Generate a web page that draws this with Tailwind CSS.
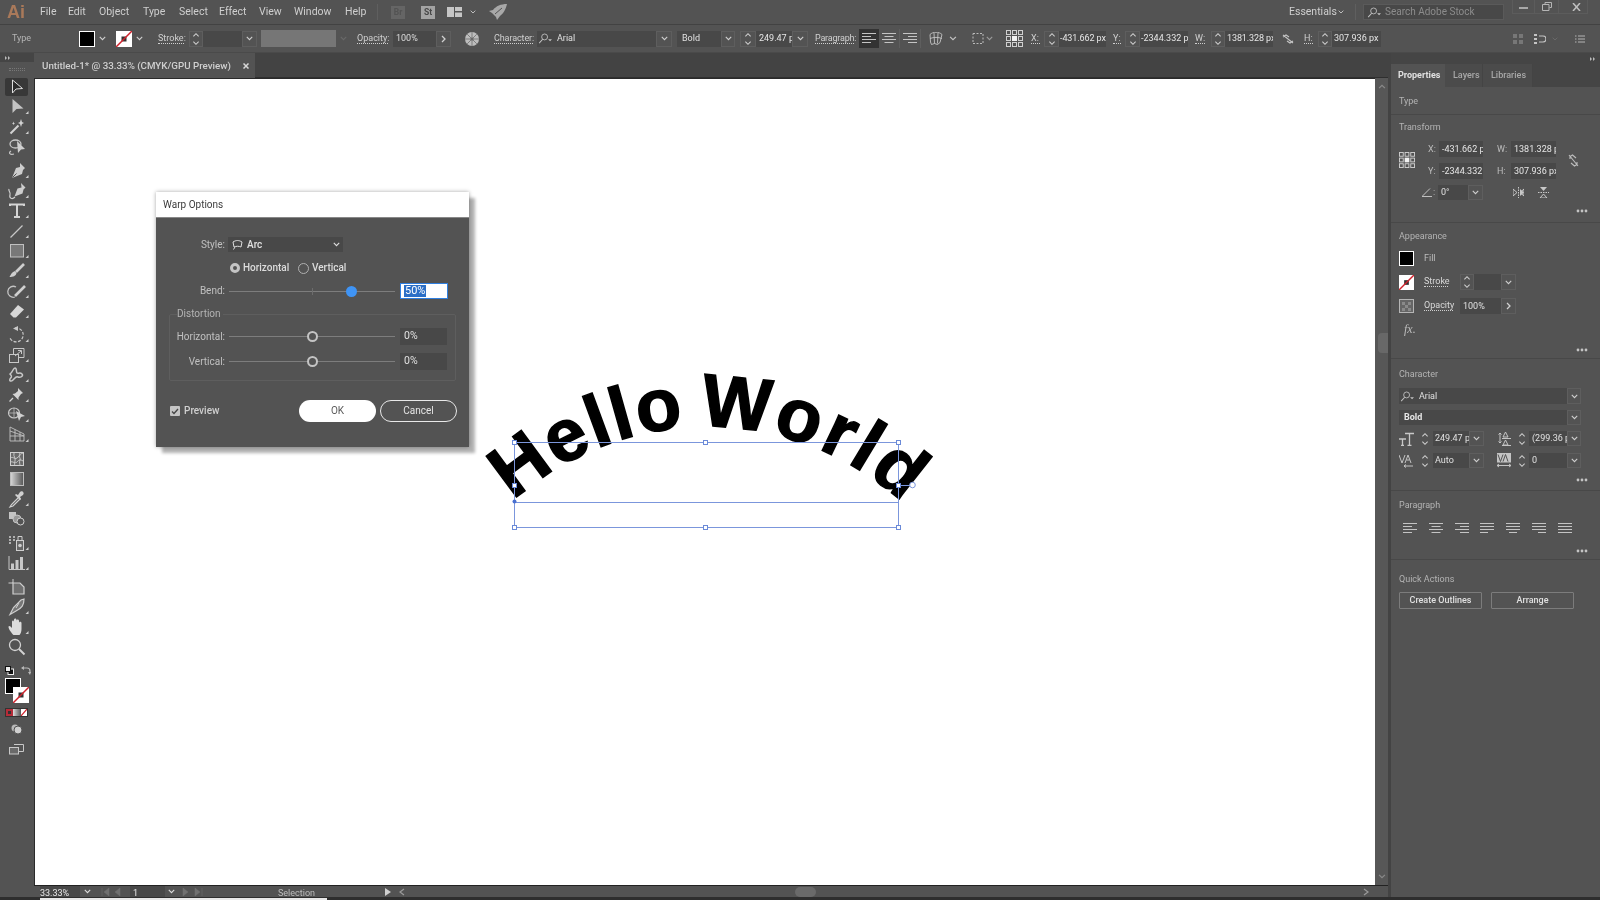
<!DOCTYPE html>
<html>
<head>
<meta charset="utf-8">
<script src="https://cdn.jsdelivr.net/npm/@tailwindcss/browser@4"></script>
</head>
<body class="m-0 bg-[#535353]">
<svg class="absolute w-0 h-0">
  <defs>
    <symbol id="chev" viewBox="0 0 9 6"><path d="M1 1l3.500 3.500L8 1" fill="none" stroke="currentColor" stroke-width="1.400"/></symbol>
    <symbol id="spin" viewBox="0 0 9 16"><path d="M1.500 5L4.500 2l3 3M1.500 11l3 3 3-3" fill="none" stroke="currentColor" stroke-width="1.200"/></symbol>
    <symbol id="dots" viewBox="0 0 12 4"><circle cx="2" cy="2" r="1.400" fill="#c4c4c4"/><circle cx="6" cy="2" r="1.400" fill="#c4c4c4"/><circle cx="10" cy="2" r="1.400" fill="#c4c4c4"/></symbol>
    <symbol id="grid9" viewBox="0 0 17 17"><g fill="none" stroke="#cfcfcf" stroke-width="1"><rect x=".5" y=".5" width="4" height="4"/><rect x="6.500" y=".5" width="4" height="4"/><rect x="12.500" y=".5" width="4" height="4"/><rect x=".5" y="6.500" width="4" height="4"/><rect x="12.500" y="6.500" width="4" height="4"/><rect x=".5" y="12.500" width="4" height="4"/><rect x="6.500" y="12.500" width="4" height="4"/><rect x="12.500" y="12.500" width="4" height="4"/></g><rect x="6" y="6" width="5" height="5" fill="#f0f0f0"/></symbol>
    <symbol id="al" viewBox="0 0 14 13"><path d="M0 1.500h14M0 4.500h9M0 7.500h14M0 10.500h9" stroke="#c4c4c4" stroke-width="1.100"/></symbol>
    <symbol id="ac" viewBox="0 0 14 13"><path d="M0 1.500h14M2.500 4.500h9M0 7.500h14M2.500 10.500h9" stroke="#c4c4c4" stroke-width="1.100"/></symbol>
    <symbol id="ar" viewBox="0 0 14 13"><path d="M0 1.500h14M5 4.500h9M0 7.500h14M5 10.500h9" stroke="#c4c4c4" stroke-width="1.100"/></symbol>
    <symbol id="jl" viewBox="0 0 14 13"><path d="M0 1.500h14M0 4.500h14M0 7.500h14M0 10.500h8" stroke="#c4c4c4" stroke-width="1.100"/></symbol>
    <symbol id="jc" viewBox="0 0 14 13"><path d="M0 1.500h14M0 4.500h14M0 7.500h14M3 10.500h8" stroke="#c4c4c4" stroke-width="1.100"/></symbol>
    <symbol id="jr" viewBox="0 0 14 13"><path d="M0 1.500h14M0 4.500h14M0 7.500h14M6 10.500h8" stroke="#c4c4c4" stroke-width="1.100"/></symbol>
    <symbol id="ja" viewBox="0 0 14 13"><path d="M0 1.500h14M0 4.500h14M0 7.500h14M0 10.500h14" stroke="#c4c4c4" stroke-width="1.100"/></symbol>
    <symbol id="find" viewBox="0 0 18 14"><circle cx="8.500" cy="5" r="3.800" fill="none" stroke="#c4c4c4" stroke-width="1.100"/><path d="M6 8l-4.500 5" stroke="#c4c4c4" stroke-width="1.300"/><path d="M13 8h5l-2.500 2.500z" fill="#c4c4c4"/></symbol>
    <symbol id="nofill" viewBox="0 0 16 16"><rect width="16" height="16" fill="#fff"/><rect x="5.500" y="5.500" width="5" height="5" fill="#333"/><path d="M0 16L16 0" stroke="#d0222c" stroke-width="1.500"/></symbol>
    <symbol id="tri" viewBox="0 0 34 20"><path d="M28.500 14v3h-3z" fill="#cfcfcf"/></symbol>
  </defs>
</svg>

<div class="relative w-[1600px] h-[900px] overflow-hidden flex flex-col bg-[#535353] text-[#d0d0d0] text-[10px] leading-none font-['Roboto',sans-serif] blur-[0.3px]">

  <!-- menu bar -->
  <div class="h-[25px] shrink-0 flex items-center border-b border-[#424242] text-[10.5px] text-[#cfcfcf]">
    <div class="ml-[7px] w-[16px] text-[18px] font-bold text-[#a9795a] font-['Liberation_Sans',sans-serif]">Ai</div>
    <div class="ml-[17px] w-[28px]">File</div>
    <div class="w-[31px]">Edit</div>
    <div class="w-[44px]">Object</div>
    <div class="w-[36px]">Type</div>
    <div class="w-[40px]">Select</div>
    <div class="w-[40px]">Effect</div>
    <div class="w-[35px]">View</div>
    <div class="w-[51px]">Window</div>
    <div class="w-[32px]">Help</div>
    <div class="w-px h-[16px] bg-[#5f5f5f]"></div>
    <div class="ml-[13px] w-[14px] h-[13px] bg-[#656565] text-[#535353] text-[8.5px] font-bold flex items-center justify-center">Br</div>
    <div class="ml-[16px] w-[14px] h-[13px] bg-[#a3a3a3] text-[#474747] text-[8.5px] font-bold flex items-center justify-center">St</div>
    <svg class="ml-[12px] w-[15px] h-[10px]" viewBox="0 0 15 10"><path d="M0 0h7v10H0zM8 0h7v4H8zM8 5.500h7V10H8z" fill="#c6c6c6"/></svg>
    <svg class="ml-[8px] w-[6px] h-[4px] text-[#c6c6c6]"><use href="#chev"/></svg>
    <svg class="ml-[13px] w-[18px] h-[16px]" viewBox="0 0 18 16"><path d="M18 0C12 0 7 2 4 6L0 7l3 2 4 4 1 3 3-4c3-2 6-7 7-12z" fill="#a8a8a8"/><path d="M13 4L6 10" stroke="#535353"/></svg>
    <div class="ml-auto w-[41px] text-[#cfcfcf]">Essentials</div>
    <svg class="ml-[8px] w-[6px] h-[4px] text-[#c6c6c6]"><use href="#chev"/></svg>
    <div class="ml-[11px] w-px h-[16px] bg-[#5f5f5f]"></div>
    <div class="ml-[7px] w-[141px] h-[16px] bg-[#484848] border border-[#5a5a5a] flex items-center text-[#8c8c8c] text-[10px]">
      <svg class="ml-[3px] w-[14px] h-[11px]"><use href="#find"/></svg>
      <span class="ml-[4px]">Search Adobe Stock</span>
    </div>
    <div class="ml-[8px] mr-[12px] w-[76px] h-[14px] self-start flex border border-t-0 border-[#5c5c5c]">
      <div class="w-[22px] flex items-center justify-center border-r border-[#5c5c5c]"><div class="w-[9px] h-[2px] bg-[#a8a8a8] mt-[3px]"></div></div>
      <div class="w-[24px] flex items-center justify-center border-r border-[#5c5c5c]"><svg class="w-[10px] h-[9px]" viewBox="0 0 10 9"><path d="M3 2.500V.5h6.500v5H7.500M.5 2.500h6.500v6H.5z" fill="none" stroke="#b5b5b5"/></svg></div>
      <div class="flex-1 flex items-center justify-end pr-[6px]"><svg class="w-[9px] h-[8px]" viewBox="0 0 9 8"><path d="M1 0l7 8M8 0L1 8" stroke="#c0c0c0" stroke-width="1.500"/></svg></div>
    </div>
  </div>

  <!-- control bar -->
  <div class="h-[28px] shrink-0 flex items-center text-[9px] whitespace-nowrap border-b border-[#4a4a4a]">
    <div class="ml-[12px] w-[67px] text-[#b4b4b4]">Type</div>
    <div class="w-[16px] h-[16px] bg-black border border-white"></div>
    <div class="w-[15px] h-[16px] flex items-center justify-center text-[#d0d0d0]"><svg class="w-[7px] h-[5px]"><use href="#chev"/></svg></div>
    <svg class="ml-[6px] w-[16px] h-[16px]"><use href="#nofill"/></svg>
    <div class="w-[15px] h-[16px] flex items-center justify-center text-[#d0d0d0]"><svg class="w-[7px] h-[5px]"><use href="#chev"/></svg></div>
    <div class="ml-[11px] w-[26px] border-b border-dotted border-[#cfcfcf]">Stroke:</div>
    <div class="ml-[5px] w-[14px] h-[16px] border border-[#5e5e5e] flex items-center justify-center text-[#d0d0d0]"><svg class="w-[8px] h-[14px]"><use href="#spin"/></svg></div>
    <div class="w-[39px] h-[16px] bg-[#484848]"></div>
    <div class="w-[15px] h-[16px] border border-[#5e5e5e] flex items-center justify-center text-[#d0d0d0]"><svg class="w-[7px] h-[5px]"><use href="#chev"/></svg></div>
    <div class="ml-[4px] w-[75px] h-[17px] bg-[#767676]"></div>
    <div class="w-[14px] flex justify-center text-[#696969]"><svg class="w-[7px] h-[5px]"><use href="#chev"/></svg></div>
    <div class="ml-[7px] w-[31px] border-b border-dotted border-[#cfcfcf]">Opacity:</div>
    <div class="ml-[5px] w-[43px] h-[16px] bg-[#484848] pl-[3px] flex items-center text-[#dcdcdc]">100%</div>
    <div class="w-[15px] h-[16px] border border-[#5e5e5e] flex items-center justify-center text-[#d0d0d0]"><svg class="w-[5px] h-[8px]" viewBox="0 0 5 8"><path d="M1 1l3 3-3 3" fill="none" stroke="currentColor" stroke-width="1.300"/></svg></div>
    <svg class="ml-[14px] w-[14px] h-[14px]" viewBox="0 0 13 13"><circle cx="6.500" cy="6.500" r="6.500" fill="#bdbdbd"/><path d="M6.500 0v13M0 6.500h13M2 2l9 9M11 2l-9 9" stroke="#686868" stroke-width=".7"/><circle cx="6.500" cy="6.500" r="1.500" fill="#686868"/></svg>
    <div class="ml-[15px] w-[39px] border-b border-dotted border-[#cfcfcf] tracking-[-0.1px]">Character:</div>
    <div class="ml-[4px] w-[119px] h-[16px] bg-[#484848] flex items-center text-[#e0e0e0]"><svg class="ml-px w-[14px] h-[11px]"><use href="#find"/></svg><span class="ml-[5px]">Arial</span></div>
    <div class="w-[16px] h-[16px] border border-[#5e5e5e] flex items-center justify-center text-[#d0d0d0]"><svg class="w-[7px] h-[5px]"><use href="#chev"/></svg></div>
    <div class="ml-[5px] w-[44px] h-[16px] bg-[#484848] pl-[5px] flex items-center text-[#e0e0e0]">Bold</div>
    <div class="w-[14px] h-[16px] border border-[#5e5e5e] flex items-center justify-center text-[#d0d0d0]"><svg class="w-[7px] h-[5px]"><use href="#chev"/></svg></div>
    <div class="ml-[5px] w-[16px] h-[16px] border border-[#5e5e5e] flex items-center justify-center text-[#d0d0d0]"><svg class="w-[8px] h-[14px]"><use href="#spin"/></svg></div>
    <div class="w-[36px] h-[16px] bg-[#484848] pl-[3px] flex items-center overflow-hidden text-[#e6e6e6]">249.47 pt</div>
    <div class="w-[16px] h-[16px] border border-[#5e5e5e] flex items-center justify-center text-[#d0d0d0]"><svg class="w-[7px] h-[5px]"><use href="#chev"/></svg></div>
    <div class="ml-[7px] w-[39px] border-b border-dotted border-[#cfcfcf] tracking-[-0.2px]">Paragraph:</div>
    <div class="ml-[5px] w-[20px] h-[19px] bg-[#333] flex items-center justify-center"><svg class="w-[14px] h-[13px]"><use href="#al"/></svg></div>
    <div class="w-[21px] h-[19px] border-r border-[#5e5e5e] flex items-center justify-center"><svg class="w-[14px] h-[13px]"><use href="#ac"/></svg></div>
    <div class="w-[21px] h-[19px] border-r border-[#5e5e5e] flex items-center justify-center"><svg class="w-[14px] h-[13px]"><use href="#ar"/></svg></div>
    <svg class="ml-[8px] w-[14px] h-[13px]" viewBox="0 0 14 13"><path d="M1 2.500c3-3 9-3 12 0l-2 8-2.500 2-3-1-3 1L1.500 10zM5 1l.5 10.500M9 1l-.5 10.500M1 6.500c4-1.500 8-1.500 12 0" fill="none" stroke="#c4c4c4" stroke-width=".9"/></svg>
    <svg class="ml-[6px] w-[8px] h-[5px] text-[#c4c4c4]"><use href="#chev"/></svg>
    <svg class="ml-[15px] w-[12px] h-[13px]" viewBox="0 0 12 13"><rect x="1" y="1.500" width="10" height="10" fill="none" stroke="#bbb" stroke-dasharray="2 1.500"/></svg>
    <svg class="ml-[2px] w-[7px] h-[5px] text-[#9c9c9c]"><use href="#chev"/></svg>
    <svg class="ml-[13px] w-[17px] h-[17px]"><use href="#grid9"/></svg>
    <div class="ml-[8px] w-[9px] border-b border-dotted border-[#cfcfcf]">X:</div>
    <div class="ml-[4px] w-[15px] h-[16px] border border-[#5e5e5e] flex items-center justify-center text-[#d0d0d0]"><svg class="w-[8px] h-[14px]"><use href="#spin"/></svg></div>
    <div class="w-[47px] h-[16px] bg-[#484848] pl-[1px] flex items-center overflow-hidden text-[#e6e6e6] tracking-[-0.1px]">-431.662 px</div>
    <div class="ml-[7px] w-[8px] border-b border-dotted border-[#cfcfcf]">Y:</div>
    <div class="ml-[4px] w-[15px] h-[16px] border border-[#5e5e5e] flex items-center justify-center text-[#d0d0d0]"><svg class="w-[8px] h-[14px]"><use href="#spin"/></svg></div>
    <div class="w-[48px] h-[16px] bg-[#484848] pl-[1px] flex items-center overflow-hidden text-[#e6e6e6]">-2344.332 px</div>
    <div class="ml-[7px] w-[10px] border-b border-dotted border-[#cfcfcf]">W:</div>
    <div class="ml-[6px] w-[14px] h-[16px] border border-[#5e5e5e] flex items-center justify-center text-[#d0d0d0]"><svg class="w-[8px] h-[14px]"><use href="#spin"/></svg></div>
    <div class="w-[48px] h-[16px] bg-[#484848] pl-[2px] flex items-center overflow-hidden text-[#e6e6e6] tracking-[-0.1px]">1381.328 px</div>
    <svg class="ml-[9px] w-[12px] h-[10px]" viewBox="0 0 12 10"><path d="M1 3l3-2 3 2M5 7l3 2 3-2M1 1l10 8" fill="none" stroke="#c4c4c4" stroke-width="1.100"/></svg>
    <div class="ml-[10px] w-[9px] border-b border-dotted border-[#cfcfcf]">H:</div>
    <div class="ml-[5px] w-[14px] h-[16px] border border-[#5e5e5e] flex items-center justify-center text-[#d0d0d0]"><svg class="w-[8px] h-[14px]"><use href="#spin"/></svg></div>
    <div class="w-[49px] h-[16px] bg-[#484848] pl-[2px] flex items-center overflow-hidden text-[#e6e6e6]">307.936 px</div>
    <svg class="ml-[132px] w-[10px] h-[10px]" viewBox="0 0 10 10"><path d="M0 0h4v4H0zM6 0h4v4H6zM0 6h4v4H0zM6 6h4v4H6z" fill="#777"/></svg>
    <svg class="ml-[11px] w-[12px] h-[12px]" viewBox="0 0 12 12"><path d="M0 1h3v2H0zM0 5h3v2H0zM0 9h3v2H0z" fill="#c4c4c4"/><path d="M5 3h4a3 3 0 0 1 0 6H5" fill="none" stroke="#c4c4c4" stroke-width="1.200"/></svg>
    <svg class="ml-[6px] w-[6px] h-[4px] text-[#6b6b6b]"><use href="#chev"/></svg>
    <svg class="ml-[17px] w-[10px] h-[8px]" viewBox="0 0 10 8"><path d="M0 1h1.500M3 1h7M0 4h1.500M3 4h7M0 7h1.500M3 7h7" stroke="#b5b5b5"/></svg>
  </div>

  <!-- main -->
  <div class="flex-1 min-h-0 flex">
    <!-- tool bar -->
    <div class="w-[34px] shrink-0 flex flex-col">
      <div class="h-[9px] bg-[#454545] flex items-center pl-[5px] text-[#bcbcbc] text-[6px]">
        <svg class="w-[5px] h-[4px]" viewBox="0 0 5 4"><path d="M0 0l2 2-2 2zM3 0l2 2-2 2z" fill="#bbb"/></svg>
      </div>
      <div class="h-[15px] flex items-center justify-center"><div class="w-[16px] h-[3px] border-y border-dotted border-[#777]"></div></div>
      <div class="relative">
        <div class="absolute left-[5px] top-px w-[23px] h-[18px] bg-[#383838] rounded-[2px]"></div>
        <svg class="relative block w-[34px] h-[20px]" viewBox="0 0 34 20"><path d="M12.500 3v13l3.500-4 6.500-.5z" fill="#2b2b2b" stroke="#dedede" stroke-width="1"/></svg>
      </div>
      <svg class="block w-[34px] h-[20px]" viewBox="0 0 34 20"><path d="M12.500 2v14l4-4 7-.5z" fill="#c4c4c4"/><use href="#tri"/></svg>
      <svg class="block w-[34px] h-[20px]" viewBox="0 0 34 20"><path d="M10.500 16.500l8-8" stroke="#d2d2d2" stroke-width="2"/><path d="M20 5l1-3 1 3 2 1-2 1-1 3-1-3-2-1zM13 6l.5-1.500.5 1.500 1 .5-1 .5-.5 1-.5-1-1-.5z" fill="#d2d2d2"/><use href="#tri"/></svg>
      <svg class="block w-[34px] h-[20px]" viewBox="0 0 34 20"><ellipse cx="15.500" cy="7" rx="5.500" ry="4" fill="none" stroke="#c8c8c8" stroke-width="1.300"/><path d="M14 17c-4 1-6-1-3-3" fill="none" stroke="#c8c8c8" stroke-width="1.200"/><path d="M17 4l8 8-4 .5-3 3.500z" fill="#cfcfcf"/></svg>

      <svg class="block w-[34px] h-[20px] mt-[4px]" viewBox="0 0 34 20"><path d="M20 2l5 5-2 2-1 4-10 4 4-10 4-1z" fill="#cdcdcd"/><path d="M12.500 16.500l4-4" stroke="#535353"/><use href="#tri"/></svg>
      <svg class="block w-[34px] h-[20px]" viewBox="0 0 34 20"><path d="M21 2l4.500 4.500-2 2-1 4-8 3 3-8 4-1z" fill="#cdcdcd"/><path d="M15 16c-3 3-6 1-5-2s-2-4-1-6" fill="none" stroke="#cdcdcd" stroke-width="1.200"/><use href="#tri"/></svg>
      <svg class="block w-[34px] h-[20px]" viewBox="0 0 34 20"><path d="M10 5V3.500h14V5M17 3.500V15.500M14 16h6" fill="none" stroke="#d4d4d4" stroke-width="2"/><use href="#tri"/></svg>
      <svg class="block w-[34px] h-[20px]" viewBox="0 0 34 20"><path d="M10.500 16.500l12-12" stroke="#c8c8c8" stroke-width="1.200"/><use href="#tri"/></svg>
      <svg class="block w-[34px] h-[20px]" viewBox="0 0 34 20"><rect x="10.500" y="3.500" width="13" height="12.500" fill="#787878" stroke="#c0c0c0"/><use href="#tri"/></svg>
      <svg class="block w-[34px] h-[20px]" viewBox="0 0 34 20"><path d="M24 3l-8 8" stroke="#cecece" stroke-width="2.600"/><path d="M15 10c-3 1-4 3-5.500 6 3.500 0 6.500-1 7-4z" fill="#cecece"/><use href="#tri"/></svg>
      <svg class="block w-[34px] h-[20px]" viewBox="0 0 34 20"><path d="M16 6a5.500 5.500 0 1 0 -1 10" fill="none" stroke="#c4c4c4" stroke-width="1.300"/><path d="M15 15L25 5" stroke="#d0d0d0" stroke-width="2.600"/><use href="#tri"/></svg>
      <svg class="block w-[34px] h-[20px]" viewBox="0 0 34 20"><path d="M18 4l6 4.500-8 8h-2.500L10 13z" fill="#d8d8d8"/><use href="#tri"/></svg>

      <svg class="block w-[34px] h-[20px] mt-[4px]" viewBox="0 0 34 20"><path d="M15 3a7 7 0 1 1-5.500 9" fill="none" stroke="#c8c8c8" stroke-width="1.200" stroke-dasharray="3 1.500"/><path d="M18 1v5l-5-2.500z" fill="#c8c8c8"/><use href="#tri"/></svg>
      <svg class="block w-[34px] h-[20px]" viewBox="0 0 34 20"><rect x="9.500" y="9.500" width="9" height="8" fill="none" stroke="#c8c8c8"/><path d="M13.500 9V3.500H24v9h-5.500" fill="none" stroke="#c8c8c8"/><path d="M15 11l6-5M18 5.500h3.500V9" fill="none" stroke="#c8c8c8"/><use href="#tri"/></svg>
      <svg class="block w-[34px] h-[20px]" viewBox="0 0 34 20"><path d="M10 9c3-2 3-6 5-6s1 4 2 5 3-1 5 1-2 4-4 3-3 1-5 3-4 1-3-1 3-2 0-5z" fill="none" stroke="#c8c8c8" stroke-width="1.500"/><use href="#tri"/></svg>
      <svg class="block w-[34px] h-[20px]" viewBox="0 0 34 20"><path d="M18 3l5 5-2 1-2.500 3.500V15l-6-6 2.500-.5L18 6z" fill="#d4d4d4"/><path d="M13 13l-3.500 3.500" stroke="#d4d4d4" stroke-width="1.200"/><use href="#tri"/></svg>
      <svg class="block w-[34px] h-[20px]" viewBox="0 0 34 20"><ellipse cx="14" cy="8" rx="5.500" ry="5" fill="none" stroke="#c8c8c8" stroke-width="1.200"/><path d="M9 8h10M14 3v10" stroke="#c8c8c8" stroke-width=".7"/><path d="M16 6l9 5-4 1-2 4z" fill="#d0d0d0"/><use href="#tri"/></svg>
      <svg class="block w-[34px] h-[20px]" viewBox="0 0 34 20"><path d="M10 2l14 7v7H10zM10 6l14 5M10 11h14M15 4.500V16M20 7v9" fill="none" stroke="#c0c0c0" stroke-width=".9"/><use href="#tri"/></svg>

      <svg class="block w-[34px] h-[20px] mt-[4px]" viewBox="0 0 34 20"><rect x="10.500" y="3.500" width="13" height="13" fill="#6a6a6a" stroke="#cfcfcf"/><path d="M10 9c4-2 4 2 7 0s4-5 6-5M10 13c3-1 5 2 7 0s3-3 6-1M14 4c-1 4 2 4 1 8s0 4 0 4M20 4c-2 4 1 5 0 7s0 5 0 5" fill="none" stroke="#cfcfcf" stroke-width=".9"/></svg>
      <svg class="block w-[34px] h-[20px]" viewBox="0 0 34 20"><defs><linearGradient id="gr"><stop offset="0" stop-color="#d8d8d8"/><stop offset="1" stop-color="#555"/></linearGradient></defs><rect x="10.500" y="3.500" width="13" height="13" fill="url(#gr)" stroke="#bdbdbd"/></svg>
      <svg class="block w-[34px] h-[20px]" viewBox="0 0 34 20"><path d="M19 8l-7.500 7.500-1.500 2.500 3-1 7.500-7.500" fill="none" stroke="#d0d0d0" stroke-width="1.200"/><path d="M18 6l2-3c2-2 5 1 3 3l-3 2 1 2-1 1-5-5 1-1z" fill="#d0d0d0"/><use href="#tri"/></svg>
      <svg class="block w-[34px] h-[20px]" viewBox="0 0 34 20"><rect x="9" y="3" width="7" height="7" fill="#c4c4c4"/><circle cx="17" cy="10" r="4" fill="#989898" stroke="#c4c4c4"/><circle cx="20.500" cy="12.500" r="3.500" fill="#535353" stroke="#d0d0d0"/></svg>

      <svg class="block w-[34px] h-[20px] mt-[4px]" viewBox="0 0 34 20"><path d="M9 4h2M13 4h2M9 7h2M13 7h2M9 10h2" stroke="#cfcfcf" stroke-width="1.500"/><rect x="16.500" y="7.500" width="7" height="10" fill="#666" stroke="#cfcfcf"/><path d="M18 7V3.500h4V7" fill="none" stroke="#cfcfcf"/><circle cx="20" cy="12.500" r="1.800" fill="#cfcfcf"/><use href="#tri"/></svg>
      <svg class="block w-[34px] h-[20px]" viewBox="0 0 34 20"><path d="M9 3v13.500h16" fill="none" stroke="#c8c8c8"/><path d="M11 10.500h3V16h-3zM15.500 7h3v9h-3zM20 4h3v12h-3z" fill="#c8c8c8"/><use href="#tri"/></svg>

      <svg class="block w-[34px] h-[20px] mt-[4px]" viewBox="0 0 34 20"><path d="M13 2v4M8.500 6H13" stroke="#cfcfcf"/><path d="M13 6h7l4 4v7H13z" fill="#6f6f6f" stroke="#cfcfcf" stroke-width="1.200"/></svg>
      <svg class="block w-[34px] h-[20px]" viewBox="0 0 34 20"><path d="M24 2c0 6-2 9-8 12l-6 3.500 3.500-7L21 3z" fill="#777" stroke="#cfcfcf" stroke-width="1.200"/><path d="M19 6l-3 5" stroke="#cfcfcf"/><use href="#tri"/></svg>
      <svg class="block w-[34px] h-[20px]" viewBox="0 0 34 20"><path d="M13.500 18c-2-2-5-6-5-8s2-1 3.500 1V5c0-2 2-2 2 0V3c0-2 2.500-2 2.500 0v1c0-2 2.500-2 2.500 0v2c0-2 2.500-1.500 2.500 0v6c0 3-1 5-2 6z" fill="#dcdcdc"/><use href="#tri"/></svg>
      <svg class="block w-[34px] h-[20px]" viewBox="0 0 34 20"><circle cx="15" cy="8" r="5.500" fill="none" stroke="#d2d2d2" stroke-width="1.300"/><path d="M19 12l5.500 5.500" stroke="#d2d2d2" stroke-width="2"/></svg>

      <div class="h-[6px]"></div>
      <div class="h-[14px] relative flex items-center">
        <svg class="ml-[5px] w-[9px] h-[9px]" viewBox="0 0 9 9"><rect x="3" y="3" width="5.500" height="5.500" fill="#111" stroke="#eee"/><rect x=".5" y=".5" width="5" height="5" fill="#eee" stroke="#111"/></svg>
        <svg class="ml-[7px] w-[10px] h-[10px]" viewBox="0 0 10 10"><path d="M1 3h5c2 0 3 1 3 3v2" fill="none" stroke="#b8b8b8" stroke-width="1.200"/><path d="M3 1L0 3l3 2zM7 7l2 3 1-3z" fill="#b8b8b8"/></svg>
      </div>
      <div class="h-[27px] relative">
        <div class="absolute left-[5px] top-[1px] w-[16px] h-[16px] bg-black border border-white"></div>
        <svg class="absolute left-[13px] top-[10px] w-[16px] h-[16px]"><use href="#nofill"/></svg>
      </div>
      <div class="ml-[5px] w-[23px] h-[9px] mt-[4px] flex border border-[#333]">
        <div class="w-[7px] bg-[#b52c38] flex items-center justify-center"><div class="w-[3px] h-[3px] bg-[#333]"></div></div>
        <div class="w-[8px] bg-gradient-to-r from-[#ddd] to-[#555]"></div>
        <svg class="w-[6px] flex-1" viewBox="0 0 7 7" preserveAspectRatio="none"><rect width="7" height="7" fill="#fff"/><path d="M0 7L7 0" stroke="#d0222c" stroke-width="1.300"/></svg>
      </div>
      <div class="h-[20px] mt-[2px]">
        <svg class="block w-[34px] h-[20px]" viewBox="0 0 34 20"><circle cx="15" cy="9" r="3.500" fill="#b8b8b8"/><circle cx="18" cy="11" r="4" fill="#d0d0d0" stroke="#535353"/></svg>
      </div>
      <svg class="block w-[34px] h-[20px]" viewBox="0 0 34 20"><path d="M14 5.500h9.500v7H18" fill="none" stroke="#c8c8c8" stroke-width="1"/><rect x="9.500" y="8.500" width="9" height="6.500" fill="#6a6a6a" stroke="#c8c8c8"/></svg>
    </div>

    <!-- centre column -->
    <div class="w-[1354px] shrink-0 flex flex-col">
      <div class="h-[25px] shrink-0 flex bg-[#434343] border-b border-[#2f2f2f]">
        <div class="w-[221px] h-[25px] bg-[#535353] flex items-center pl-[8px] text-[9.750px] font-medium text-[#cfcfcf] whitespace-nowrap">
          <span class="w-[201px]">Untitled-1* @ 33.33% (CMYK/GPU Preview)</span>
          <svg class="w-[6px] h-[6px]" viewBox="0 0 6 6"><path d="M.5.5l5 5M5.500.5l-5 5" stroke="#d8d8d8" stroke-width="1.500"/></svg>
        </div>
      </div>
      <div class="flex-1 min-h-0 flex">
        <div class="w-[1341px] bg-white border-l border-t border-[#2a2a2a]"></div>
        <div class="w-[13px] flex flex-col items-center justify-between bg-[#575757] py-[6px] relative">
          <svg class="w-[8px] h-[5px] rotate-180 text-[#8a8a8a]"><use href="#chev"/></svg>
          <div class="absolute left-[3px] top-[255px] w-[10px] h-[20px] rounded-l-[4px] bg-[#686868]"></div>
          <svg class="w-[8px] h-[5px] text-[#8a8a8a]"><use href="#chev"/></svg>
        </div>
      </div>
      <div class="h-[12px] shrink-0 flex items-center text-[9px] border-t border-[#222] bg-[#535353] whitespace-nowrap">
        <div class="ml-[6px] w-[40px] h-full bg-[#484848] flex items-center pt-[4px] text-[#e8e8e8]">33.33%</div>
        <div class="w-[15px] flex justify-center text-[#ddd]"><svg class="w-[7px] h-[5px]"><use href="#chev"/></svg></div>
        <svg class="w-[35px] h-[10px]" viewBox="0 0 35 10"><path d="M7 1v8M14 1L9 5l5 4zM25 1l-5 4 5 4z" fill="#707070" stroke="#707070" stroke-width=".5"/></svg>
        <div class="w-[35px] h-full bg-[#484848] flex items-center pl-[3px] pt-[4px] text-[#e8e8e8]">1</div>
        <div class="w-[13px] flex justify-center text-[#ddd]"><svg class="w-[7px] h-[5px]"><use href="#chev"/></svg></div>
        <svg class="w-[30px] h-[10px]" viewBox="0 0 30 10"><path d="M5 1l5 4-5 4zM17 1l5 4-5 4zM24 1v8" fill="#707070" stroke="#707070" stroke-width=".5"/></svg>
        <div class="w-[177px] text-center text-[#bdbdbd] pt-[4px]">Selection</div>
        <svg class="w-[6px] h-[8px]" viewBox="0 0 6 8"><path d="M0 0l6 4-6 4z" fill="#d0d0d0"/></svg>
        <svg class="ml-[8px] w-[6px] h-[8px]" viewBox="0 0 6 8"><path d="M5 1L1 4l4 3" fill="none" stroke="#9a9a9a" stroke-width="1.200"/></svg>
        <div class="flex-1 relative h-full">
          <div class="absolute left-[390px] top-[1px] w-[21px] h-[10px] rounded-full bg-[#6a6a6a]"></div>
        </div>
        <svg class="mr-[19px] w-[6px] h-[8px]" viewBox="0 0 6 8"><path d="M1 1l4 3-4 3" fill="none" stroke="#9a9a9a" stroke-width="1.200"/></svg>
      </div>
    </div>

    <!-- properties panel -->
    <div class="w-[212px] shrink-0 border-l-[3px] border-[#434343] flex flex-col text-[9px] text-[#bdbdbd] whitespace-nowrap">
      <div class="h-[11px] shrink-0 bg-[#454545] flex items-center justify-end pr-[5px]">
        <svg class="w-[5px] h-[4px]" viewBox="0 0 5 4"><path d="M0 0l2 2-2 2zM3 0l2 2-2 2z" fill="#bbb"/></svg>
      </div>
      <div class="h-[23px] shrink-0 flex bg-[#454545]">
        <div class="w-[54px] bg-[#535353] flex items-center pl-[7px] font-bold text-[#e0e0e0]">Properties</div>
        <div class="w-[38px] bg-[#4b4b4b] border-r border-[#444] flex items-center pl-[8px] text-[#a8a8a8] font-medium">Layers</div>
        <div class="w-[50px] bg-[#4b4b4b] border-r border-[#444] flex items-center pl-[8px] text-[#a8a8a8] font-medium">Libraries</div>
      </div>
      <div class="h-[28px] shrink-0 border-b border-[#484848] pt-[10px] pl-[8px] text-[#b4b4b4]">Type</div>

      <!-- Transform -->
      <div class="h-[108px] shrink-0 border-b border-[#484848] pl-[8px] pt-[8px] flex flex-col">
        <div class="text-[#b4b4b4] h-[18px]">Transform</div>
        <div class="flex">
          <div class="flex flex-col w-[29px] pt-[11px]"><svg class="w-[16px] h-[16px]"><use href="#grid9"/></svg></div>
          <div class="flex flex-col gap-[6px]">
            <div class="flex items-center h-[16px]">
              <div class="w-[11px]">X:</div>
              <div class="w-[44px] h-[16px] bg-[#484848] pl-[3px] flex items-center overflow-hidden text-[#e6e6e6]">-431.662 px</div>
              <div class="ml-[14px] w-[14px]">W:</div>
              <div class="w-[45px] h-[16px] bg-[#484848] pl-[3px] flex items-center overflow-hidden text-[#e6e6e6]">1381.328 px</div>
            </div>
            <div class="flex items-center h-[16px]">
              <div class="w-[11px]">Y:</div>
              <div class="w-[44px] h-[16px] bg-[#484848] pl-[3px] flex items-center overflow-hidden text-[#e6e6e6]">-2344.332 px</div>
              <div class="ml-[14px] w-[14px]">H:</div>
              <div class="w-[45px] h-[16px] bg-[#484848] pl-[3px] flex items-center overflow-hidden text-[#e6e6e6]">307.936 px</div>
            </div>
          </div>
          <svg class="ml-[11px] mt-[13px] w-[13px] h-[13px]" viewBox="0 0 13 13"><path d="M2 1l9 11M3 5V2.500L5.500 1 9 4M10 8v2.500L7.500 12 4 9" fill="none" stroke="#bdbdbd" stroke-width="1.100"/></svg>
        </div>
        <div class="flex items-center h-[15px] mt-[6px] pl-[23px]">
          <svg class="w-[10px] h-[9px]" viewBox="0 0 10 9"><path d="M0 8.500h10M0 8.500L8 .5" fill="none" stroke="#c0c0c0"/></svg>
          <div class="ml-[1px] w-[5px]">:</div>
          <div class="w-[30px] h-[15px] bg-[#484848] pl-[3px] flex items-center text-[#e0e0e0]">0°</div>
          <div class="w-[15px] h-[15px] border border-[#5e5e5e] flex items-center justify-center text-[#d0d0d0]"><svg class="w-[7px] h-[5px]"><use href="#chev"/></svg></div>
          <svg class="ml-[30px] w-[11px] h-[11px]" viewBox="0 0 11 11"><path d="M0 2l4 3.500L0 9zM11 2L7 5.500 11 9z" fill="none" stroke="#c8c8c8"/><path d="M7 2l4 3.500L7 9z" fill="#c8c8c8"/><path d="M5.500 0v11" stroke="#c8c8c8" stroke-dasharray="1.500 1"/></svg>
          <svg class="ml-[14px] w-[11px] h-[11px]" viewBox="0 0 11 11"><path d="M2 0h7L5.500 4z" fill="#c8c8c8"/><path d="M2 11h7L5.500 7z" fill="none" stroke="#c8c8c8"/><path d="M0 5.500h11" stroke="#c8c8c8" stroke-dasharray="1.500 1"/></svg>
        </div>
        <div class="flex justify-end pr-[12px] mt-[9px]"><svg class="w-[12px] h-[4px]"><use href="#dots"/></svg></div>
      </div>

      <!-- Appearance -->
      <div class="h-[136px] shrink-0 border-b border-[#484848] pl-[8px] pt-[9px] flex flex-col">
        <div class="text-[#b4b4b4] h-[19px]">Appearance</div>
        <div class="flex items-center h-[15px]"><div class="w-[15px] h-[15px] bg-black border border-white"></div><span class="ml-[10px]">Fill</span></div>
        <div class="flex items-center h-[16px] mt-[8px]">
          <svg class="w-[15px] h-[15px]"><use href="#nofill"/></svg>
          <span class="ml-[10px] w-[24px] border-b border-dotted border-[#cfcfcf] text-[#d8d8d8]">Stroke</span>
          <div class="ml-[12px] w-[14px] h-[16px] border border-[#5e5e5e] flex items-center justify-center text-[#d0d0d0]"><svg class="w-[8px] h-[14px]"><use href="#spin"/></svg></div>
          <div class="w-[27px] h-[16px] bg-[#484848]"></div>
          <div class="w-[15px] h-[16px] border border-[#5e5e5e] flex items-center justify-center text-[#d0d0d0]"><svg class="w-[7px] h-[5px]"><use href="#chev"/></svg></div>
        </div>
        <div class="flex items-center h-[16px] mt-[8px]">
          <svg class="w-[15px] h-[14px]" viewBox="0 0 15 14"><rect x=".5" y=".5" width="14" height="13" fill="#666" stroke="#b5b5b5"/><path d="M3 3h3v3H3zM9 3h3v3H9zM6 6h3v3H6zM3 9h3v3H3zM9 9h3v3H9z" fill="#8a8a8a"/></svg>
          <span class="ml-[10px] w-[29px] border-b border-dotted border-[#cfcfcf] text-[#d8d8d8]">Opacity</span>
          <div class="ml-[7px] w-[41px] h-[16px] bg-[#484848] pl-[3px] flex items-center text-[#e0e0e0]">100%</div>
          <div class="w-[15px] h-[16px] border border-[#5e5e5e] flex items-center justify-center text-[#d0d0d0]"><svg class="w-[5px] h-[8px]" viewBox="0 0 5 8"><path d="M1 1l3 3-3 3" fill="none" stroke="currentColor" stroke-width="1.300"/></svg></div>
        </div>
        <div class="mt-[9px] pl-[5px] h-[14px] text-[12px] italic font-['Liberation_Serif',serif] text-[#bdbdbd]">fx.</div>
        <div class="flex justify-end pr-[12px] mt-[11px]"><svg class="w-[12px] h-[4px]"><use href="#dots"/></svg></div>
      </div>

      <!-- Character -->
      <div class="h-[132px] shrink-0 border-b border-[#484848] pl-[8px] pt-[11px] flex flex-col">
        <div class="text-[#b4b4b4] h-[18px]">Character</div>
        <div class="flex h-[16px]">
          <div class="w-[168px] h-[16px] bg-[#484848] flex items-center text-[#e0e0e0]"><svg class="ml-px w-[14px] h-[11px]"><use href="#find"/></svg><span class="ml-[5px]">Arial</span></div>
          <div class="w-[14px] h-[16px] border border-[#5e5e5e] flex items-center justify-center text-[#d0d0d0]"><svg class="w-[7px] h-[5px]"><use href="#chev"/></svg></div>
        </div>
        <div class="flex h-[15px] mt-[6px]">
          <div class="w-[168px] h-[15px] bg-[#484848] flex items-center pl-[5px] font-bold text-[#e6e6e6]">Bold</div>
          <div class="w-[14px] h-[15px] border border-[#5e5e5e] flex items-center justify-center text-[#d0d0d0]"><svg class="w-[7px] h-[5px]"><use href="#chev"/></svg></div>
        </div>
        <div class="flex h-[15px] mt-[6px] items-center">
          <svg class="w-[15px] h-[14px]" viewBox="0 0 15 14"><path d="M0 7h7M3.500 7v6.500M2 13.500h3M6 1.500h9M10.500 1.500v12M8.500 13.500h4" fill="none" stroke="#c8c8c8" stroke-width="1.300"/></svg>
          <div class="ml-[4px] w-[13px] h-[15px] flex items-center justify-center text-[#d0d0d0]"><svg class="w-[8px] h-[14px]"><use href="#spin"/></svg></div>
          <div class="ml-[2px] w-[36px] h-[15px] bg-[#484848] pl-[2px] flex items-center overflow-hidden text-[#e0e0e0]">249.47 pt</div>
          <div class="w-[15px] h-[15px] border border-[#5e5e5e] flex items-center justify-center text-[#d0d0d0]"><svg class="w-[7px] h-[5px]"><use href="#chev"/></svg></div>
          <svg class="ml-[13px] w-[14px] h-[15px]" viewBox="0 0 14 15"><path d="M6 6l2.500-5L11 6zM6 14l2.500-5L11 14zM3 2v10M1.500 3.500L3 2l1.500 1.500M1.500 10.500L3 12l1.500-1.500M5 7.500h9M5 14.500h9" fill="none" stroke="#c4c4c4"/></svg>
          <div class="ml-[4px] w-[14px] h-[15px] flex items-center justify-center text-[#d0d0d0]"><svg class="w-[8px] h-[14px]"><use href="#spin"/></svg></div>
          <div class="w-[38px] h-[15px] bg-[#484848] pl-[3px] flex items-center overflow-hidden text-[#e0e0e0]">(299.36 pt)</div>
          <div class="w-[14px] h-[15px] border border-[#5e5e5e] flex items-center justify-center text-[#d0d0d0]"><svg class="w-[7px] h-[5px]"><use href="#chev"/></svg></div>
        </div>
        <div class="flex h-[15px] mt-[7px] items-center">
          <svg class="w-[15px] h-[14px]" viewBox="0 0 15 14"><path d="M0 1l3 8 3-8M6 9l3-8 3 8M7.500 6h3M5 12h9M5 12l2-1.500M5 12l2 1.500" fill="none" stroke="#c4c4c4"/></svg>
          <div class="ml-[4px] w-[13px] h-[15px] flex items-center justify-center text-[#d0d0d0]"><svg class="w-[8px] h-[14px]"><use href="#spin"/></svg></div>
          <div class="ml-[2px] w-[36px] h-[15px] bg-[#484848] pl-[2px] flex items-center text-[#e0e0e0]">Auto</div>
          <div class="w-[15px] h-[15px] border border-[#5e5e5e] flex items-center justify-center text-[#d0d0d0]"><svg class="w-[7px] h-[5px]"><use href="#chev"/></svg></div>
          <svg class="ml-[13px] w-[14px] h-[15px]" viewBox="0 0 14 15"><rect width="14" height="9.500" fill="#c4c4c4"/><path d="M1 1.500l2.500 7 2.500-7M6 8.500l2.500-7 2.500 7" fill="none" stroke="#535353"/><path d="M0 12.500h14M0 12.500l2-1.500M0 12.500L2 14M14 12.500L12 11M14 12.500L12 14" fill="none" stroke="#c4c4c4"/></svg>
          <div class="ml-[4px] w-[14px] h-[15px] flex items-center justify-center text-[#d0d0d0]"><svg class="w-[8px] h-[14px]"><use href="#spin"/></svg></div>
          <div class="w-[38px] h-[15px] bg-[#484848] pl-[3px] flex items-center text-[#e0e0e0]">0</div>
          <div class="w-[14px] h-[15px] border border-[#5e5e5e] flex items-center justify-center text-[#d0d0d0]"><svg class="w-[7px] h-[5px]"><use href="#chev"/></svg></div>
        </div>
        <div class="flex justify-end pr-[12px] mt-[10px]"><svg class="w-[12px] h-[4px]"><use href="#dots"/></svg></div>
      </div>

      <!-- Paragraph -->
      <div class="h-[69px] shrink-0 border-b border-[#484848] pl-[8px] pt-[10px] flex flex-col">
        <div class="text-[#b4b4b4] h-[21px]">Paragraph</div>
        <div class="flex pl-[4px] gap-[11.800px] h-[13px]">
          <svg class="w-[14px] h-[13px]"><use href="#al"/></svg>
          <svg class="w-[14px] h-[13px]"><use href="#ac"/></svg>
          <svg class="w-[14px] h-[13px]"><use href="#ar"/></svg>
          <svg class="w-[14px] h-[13px]"><use href="#jl"/></svg>
          <svg class="w-[14px] h-[13px]"><use href="#jc"/></svg>
          <svg class="w-[14px] h-[13px]"><use href="#jr"/></svg>
          <svg class="w-[14px] h-[13px]"><use href="#ja"/></svg>
        </div>
        <div class="flex justify-end pr-[12px] mt-[14px]"><svg class="w-[12px] h-[4px]"><use href="#dots"/></svg></div>
      </div>

      <!-- Quick actions -->
      <div class="pl-[8px] pt-[15px] flex flex-col">
        <div class="text-[#b4b4b4] h-[17px]">Quick Actions</div>
        <div class="flex gap-[9px]">
          <div class="w-[83px] h-[17px] border border-[#7c7c7c] rounded-[1px] flex items-center justify-center text-[#e0e0e0] font-medium">Create Outlines</div>
          <div class="w-[83px] h-[17px] border border-[#7c7c7c] rounded-[1px] flex items-center justify-center text-[#e0e0e0] font-medium">Arrange</div>
        </div>
      </div>
    </div>
  </div>

  <!-- bottom strip -->
  <div class="h-[3px] shrink-0 bg-[#2e2e2e] flex"><div class="ml-[40px] mt-px w-[287px] h-[2px] bg-[#e8e8e8]"></div></div>

  <!-- artwork on the canvas -->
  <svg class="absolute left-0 top-0 w-[1600px] h-[900px] pointer-events-none" viewBox="0 0 1600 900">
    <defs><path id="arc" d="M510 504A290 290 0 0 1 904 504"/></defs>
    <text font-family="Liberation Sans, Arial, sans-serif" font-weight="700" font-size="74" letter-spacing="2" word-spacing="-9" fill="#000" stroke="#000" stroke-width="1.500"><textPath href="#arc" startOffset="4.500">Hello <tspan letter-spacing="3.400">World</tspan></textPath></text>
    <g fill="none" stroke="#7b96dc" stroke-width="1">
      <path d="M514.500 442.500H898.500V527.500H514.500zM514.500 502.500H898.500M898.500 485.500H912"/>
      <circle cx="912.500" cy="485" r="2.800" fill="#fff"/>
    </g>
    <g fill="#fff" stroke="#6a8ad8" stroke-width="1">
      <rect x="512.500" y="440.500" width="4" height="4"/><rect x="703.500" y="440.500" width="4" height="4"/><rect x="896.500" y="440.500" width="4" height="4"/>
      <rect x="512.500" y="483.500" width="4" height="4"/><rect x="896.500" y="483.500" width="4" height="4"/>
      <rect x="512.500" y="525.500" width="4" height="4"/><rect x="703.500" y="525.500" width="4" height="4"/><rect x="896.500" y="525.500" width="4" height="4"/>
    </g>
    <circle cx="514.500" cy="501.500" r="2" fill="#4a70d0"/>
  </svg>

  <!-- Warp dialog -->
  <div class="absolute left-[156px] top-[192px] w-[313px] h-[255px] flex flex-col bg-[#535353] shadow-[6px_6px_3px_rgba(0,0,0,0.3),0_0_4px_rgba(0,0,0,0.35)] text-[10px] text-[#c0c0c0] whitespace-nowrap">
    <div class="h-[26px] shrink-0 bg-white flex items-center pl-[7px] text-[10px] text-[#3c3c3c] border-b border-[#888]">Warp Options</div>
    <div class="flex items-center h-[15px] mt-[19px]">
      <div class="w-[69px] text-right">Style:</div>
      <div class="ml-[3px] w-[115px] h-[15px] bg-[#484848] flex items-center text-[#e0e0e0]">
        <svg class="ml-[4px] w-[11px] h-[10px]" viewBox="0 0 11 10"><path d="M1 2c3-2 6-2 9 0L9 7c-2-1-5-1-7 0z" fill="none" stroke="#ddd"/><path d="M3 7L1.500 9.500" stroke="#ddd"/></svg>
        <span class="ml-[4px] font-medium">Arc</span>
        <svg class="ml-auto mr-[3px] w-[7px] h-[5px] text-[#e0e0e0]"><use href="#chev"/></svg>
      </div>
    </div>
    <div class="flex items-center h-[14px] mt-[9px] pl-[74px] text-[#dcdcdc]">
      <div class="w-[10px] h-[10px] rounded-full bg-[#535353] border-[3px] border-[#c4c4c4]"></div>
      <span class="ml-[3px] w-[55px] font-medium">Horizontal</span>
      <div class="w-[11px] h-[11px] rounded-full border border-[#b0b0b0]"></div>
      <span class="ml-[3px] font-medium">Vertical</span>
    </div>
    <div class="flex items-center h-[16px] mt-[8px]">
      <div class="w-[69px] text-right">Bend:</div>
      <div class="relative ml-[4px] w-[166px] h-[11px] flex items-center">
        <div class="w-full h-px bg-[#7d7d7d]"></div>
        <div class="absolute left-[83px] top-[2px] w-px h-[7px] bg-[#6d6d6d]"></div>
        <div class="absolute left-[117px] top-0 w-[11px] h-[11px] rounded-full bg-[#3f94f5]"></div>
      </div>
      <div class="ml-[5px] w-[48px] h-[16px] bg-white border border-[#2f7fe0] pl-[3px] flex items-center"><span class="bg-[#2b6fc7] text-white text-[11px] px-px leading-[12px]">50%</span></div>
    </div>
    <div class="relative mx-[13px] mt-[15px] h-[67px] border border-[#5e5e5e] rounded-[2px] flex flex-col">
      <div class="absolute left-[7px] -top-[6px] bg-[#535353] pr-[2px] text-[#b4b4b4]">Distortion</div>
      <div class="flex items-center h-[17px] mt-[13px]">
        <div class="w-[55px] text-right">Horizontal:</div>
        <div class="relative ml-[4px] w-[166px] h-[11px] flex items-center">
          <div class="w-full h-px bg-[#7d7d7d]"></div>
          <div class="absolute left-[78px] top-0 w-[11px] h-[11px] rounded-full bg-[#535353] border-[2px] border-[#c4c4c4]"></div>
        </div>
        <div class="ml-[5px] w-[47px] h-[17px] bg-[#484848] pl-[4px] flex items-center text-[#e0e0e0] text-[10.500px]">0%</div>
      </div>
      <div class="flex items-center h-[17px] mt-[8px]">
        <div class="w-[55px] text-right">Vertical:</div>
        <div class="relative ml-[4px] w-[166px] h-[11px] flex items-center">
          <div class="w-full h-px bg-[#7d7d7d]"></div>
          <div class="absolute left-[78px] top-0 w-[11px] h-[11px] rounded-full bg-[#535353] border-[2px] border-[#c4c4c4]"></div>
        </div>
        <div class="ml-[5px] w-[47px] h-[17px] bg-[#484848] pl-[4px] flex items-center text-[#e0e0e0] text-[10.500px]">0%</div>
      </div>
    </div>
    <div class="flex items-center mt-[19px] pl-[14px] h-[22px]">
      <div class="w-[10px] h-[10px] bg-[#c4c4c4] rounded-[1px] flex items-center justify-center"><svg class="w-[8px] h-[7px]" viewBox="0 0 8 7"><path d="M1 3.500l2 2 4-4.500" fill="none" stroke="#444" stroke-width="1.300"/></svg></div>
      <span class="ml-[4px] w-[35px] font-medium text-[#d0d0d0]">Preview</span>
      <div class="ml-[80px] w-[77px] h-[22px] rounded-full bg-white flex items-center justify-center text-[#5a5a5a]">OK</div>
      <div class="ml-[4px] w-[77px] h-[22px] rounded-full border border-[#e8e8e8] flex items-center justify-center text-[#e4e4e4]">Cancel</div>
    </div>
  </div>
</div>
</body>
</html>
